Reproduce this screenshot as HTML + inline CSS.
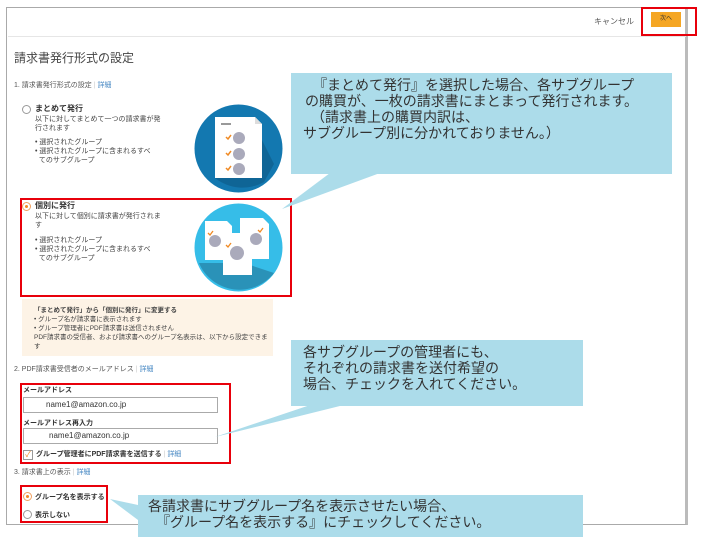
<!DOCTYPE html><html><head><meta charset="utf-8"><style>
body{margin:0;width:703px;height:545px;background:#fff;position:relative;overflow:hidden;font-family:"Liberation Sans","Noto Sans CJK JP",sans-serif;color:#333}
.a{position:absolute;white-space:nowrap}
.s{font-size:7px;line-height:9px;color:#444}
.rb{position:absolute;border:2px solid #e8000b;box-sizing:border-box}
.co{position:absolute;background:#acdcea;color:#333;font-size:14px;line-height:16px;box-sizing:border-box}
.lnk{color:#4a8ac4}
.rad{position:absolute;width:9px;height:9px;border:1px solid #999;border-radius:50%;background:#fff;box-sizing:border-box}
.rad.on::after{content:"";position:absolute;left:2px;top:2px;width:3px;height:3px;border-radius:50%;background:#f08a24}
.rad.on{border-color:#f0a060}
.inp{position:absolute;border:1px solid #aaa;background:#fff;height:16px;box-sizing:border-box;font-size:8px;padding-left:22px;line-height:14px}
</style></head><body>
<div style="position:absolute;left:6px;top:7px;width:682px;height:518px;border:1px solid #aaa;border-right:3px solid #bbb;box-sizing:border-box"></div>
<div style="position:absolute;left:8px;top:36px;width:678px;height:1px;background:#e6e6e6"></div>
<div class="a" style="left:594px;top:16px;font-size:8px;color:#555">キャンセル</div>
<div style="position:absolute;left:651px;top:12px;width:30px;height:15px;background:#f5a623;font-size:6px;text-align:center;line-height:15px;color:#333">次へ</div>
<div class="rb" style="left:641px;top:7px;width:56px;height:29px"></div>
<div class="a" style="left:14px;top:49px;font-size:12px;color:#444">請求書発行形式の設定</div>
<div class="a" style="left:14px;top:80px;font-size:7px;color:#555">1. 請求書発行形式の設定 <span style="color:#ccc">|</span> <span class="lnk">詳細</span></div>
<div class="rad" style="left:22px;top:105px"></div>
<div class="a" style="left:35px;top:103px;font-size:8px;font-weight:bold">まとめて発行</div>
<div class="a s" style="left:35px;top:115px">以下に対してまとめて一つの請求書が発<br>行されます</div>
<div class="a s" style="left:35px;top:138px">• 選択されたグループ<br>• 選択されたグループに含まれるすべ<br>&nbsp;&nbsp;てのサブグループ</div>
<div class="rad on" style="left:22px;top:202px"></div>
<div class="a" style="left:35px;top:200px;font-size:8px;font-weight:bold">個別に発行</div>
<div class="a s" style="left:35px;top:212px">以下に対して個別に請求書が発行されま<br>す</div>
<div class="a s" style="left:35px;top:236px">• 選択されたグループ<br>• 選択されたグループに含まれるすべ<br>&nbsp;&nbsp;てのサブグループ</div>
<svg class="a" style="left:194px;top:104px" width="89" height="89" viewBox="0 0 89 89"><circle cx="44.5" cy="44.5" r="44" fill="#1378b0"/><path d="M21 74 L21 20 L60 20 L80 60 L70 78 A44 44 0 0 1 21 74Z" fill="#0e5d8c" opacity=".7"/><path d="M21 13 H61 L68 20 V74 H21Z" fill="#fff"/><path d="M61 13V20H68" fill="#ddd"/><rect x="27" y="19" width="10" height="2" fill="#999"/><circle cx="45" cy="34" r="6" fill="#aab"/><circle cx="45" cy="50" r="6" fill="#aab"/><circle cx="45" cy="65" r="6" fill="#aab"/><path d="M32 33l2 2 3-4M32 49l2 2 3-4M32 64l2 2 3-4" stroke="#f08a24" fill="none" stroke-width="1.5"/></svg>
<svg class="a" style="left:194px;top:203px" width="89" height="89" viewBox="0 0 89 89"><circle cx="44.5" cy="44.5" r="44" fill="#36bde8"/><path d="M5 60 L50 60 L80 70 A44 44 0 0 1 5 60Z" fill="#2a92b8"/><path d="M11 18H33L38 23V57H11Z" fill="#fff"/><path d="M46 15H69L75 21V56H46Z" fill="#fff"/><path d="M29 30H52L58 36V72H29Z" fill="#fff"/><circle cx="21" cy="38" r="6" fill="#aab"/><circle cx="62" cy="36" r="6" fill="#aab"/><circle cx="43" cy="50" r="7" fill="#aab"/><path d="M14 30l2 2 3-4M64 27l2 2 3-4M32 42l2 2 3-4" stroke="#f08a24" fill="none" stroke-width="1.3"/></svg>
<div class="rb" style="left:20px;top:198px;width:272px;height:99px"></div>
<div style="position:absolute;left:22px;top:299px;width:251px;height:57px;background:#fdf3e6"></div>
<div class="a s" style="left:34px;top:306px;font-weight:bold;font-size:6.5px">「まとめて発行」から「個別に発行」に変更する</div>
<div class="a s" style="left:34px;top:315px;font-size:6.5px">• グループ名が請求書に表示されます<br>• グループ管理者にPDF請求書は送信されません<br>PDF請求書の受信者、および請求書へのグループ名表示は、以下から設定できま<br>す</div>
<div class="a" style="left:14px;top:364px;font-size:7px;color:#555">2. PDF請求書受信者のメールアドレス <span style="color:#ccc">|</span> <span class="lnk">詳細</span></div>
<div class="a" style="left:23px;top:385px;font-size:7px;font-weight:bold">メールアドレス</div>
<div class="inp" style="left:23px;top:397px;width:195px">name1@amazon.co.jp</div>
<div class="a" style="left:23px;top:418px;font-size:7px;font-weight:bold">メールアドレス再入力</div>
<div class="inp" style="left:23px;top:428px;width:195px;padding-left:25px">name1@amazon.co.jp</div>
<div style="position:absolute;left:23px;top:450px;width:8px;height:8px;border:1px solid #999;background:#fff;font-size:8px;line-height:8px;color:#f08a24;text-align:center">✓</div>
<div class="a" style="left:36px;top:449px;font-size:7px;font-weight:bold">グループ管理者にPDF請求書を送信する <span style="color:#ccc;font-weight:normal">|</span> <span class="lnk" style="font-weight:normal">詳細</span></div>
<div class="rb" style="left:20px;top:383px;width:211px;height:81px"></div>
<div class="a" style="left:14px;top:467px;font-size:7px;color:#555">3. 請求書上の表示 <span style="color:#ccc">|</span> <span class="lnk">詳細</span></div>
<div class="rad on" style="left:23px;top:492px"></div>
<div class="a" style="left:35px;top:492px;font-size:7px;font-weight:bold">グループ名を表示する</div>
<div class="rad" style="left:23px;top:510px"></div>
<div class="a" style="left:35px;top:510px;font-size:7px;font-weight:bold">表示しない</div>
<div class="rb" style="left:20px;top:485px;width:88px;height:38px"></div>
<svg class="a" style="left:0;top:0" width="703" height="545"><polygon points="330,173 380,173 282,209" fill="#acdcea"/><polygon points="340,395 360,401 215,437" fill="#acdcea"/><polygon points="138,505 138,520 110,499" fill="#acdcea"/></svg>
<div class="co" style="left:291px;top:73px;width:381px;height:101px;padding:4px 0 0 12px;text-align:left"><div style="padding-left:10px">『まとめて発行』を選択した場合、各サブグループ</div><div style="padding-left:2px">の購買が、一枚の請求書にまとまって発行されます。</div><div style="padding-left:8px">（請求書上の購買内訳は、</div><div>サブグループ別に分かれておりません。）</div></div>
<div class="co" style="left:291px;top:340px;width:292px;height:66px;padding:4px 0 0 12px"><div>各サブグループの管理者にも、</div><div>それぞれの請求書を送付希望の</div><div>場合、チェックを入れてください。</div></div>
<div class="co" style="left:138px;top:495px;width:445px;height:42px;padding:3px 0 0 10px"><div>各請求書にサブグループ名を表示させたい場合、</div><div style="padding-left:8px">『グループ名を表示する』にチェックしてください。</div></div>
</body></html>
